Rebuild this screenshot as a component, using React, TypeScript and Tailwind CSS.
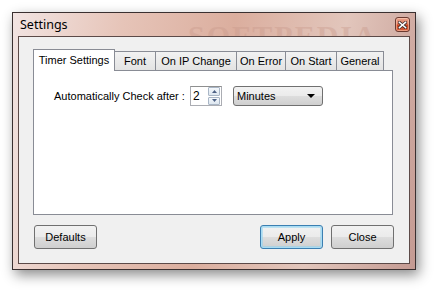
import React from 'react';

const tabs = [
  { label: 'Timer Settings', width: 'w-[82px]' },
  { label: 'Font', width: 'w-[42px]' },
  { label: 'On IP Change', width: 'w-[82px]' },
  { label: 'On Error', width: 'w-[50px]' },
  { label: 'On Start', width: 'w-[52px]' },
  { label: 'General', width: 'w-[48px]' },
];

const btn =
  'h-[24px] w-[63px] rounded-[3px] border text-[11px] text-black bg-[linear-gradient(#f2f2f2_0%,#ebebeb_48%,#dddddd_52%,#cfcfcf_100%)]';

const CloseButton = () => (
  <div className="flex h-[15px] w-[15px] items-center justify-center rounded-[3px] border border-[#6b3a30] bg-[linear-gradient(#eba58e_0%,#de7a5e_45%,#c9441f_55%,#d85e3c_100%)] shadow-[inset_0_0_0_1px_rgba(255,220,200,0.5)]">
    <svg width="9" height="8" viewBox="0 0 9 8">
      <path d="M1.5 1.5 L7.5 6.5 M7.5 1.5 L1.5 6.5" stroke="#3a2a2a" strokeWidth="3" strokeLinecap="square" />
      <path d="M1.5 1.5 L7.5 6.5 M7.5 1.5 L1.5 6.5" stroke="#ffffff" strokeWidth="1.6" strokeLinecap="square" />
    </svg>
  </div>
);

export default function App() {
  return (
    <div className="h-[291px] w-[436px] bg-white pl-[12px] pt-[12px] font-['Liberation_Sans',Arial,sans-serif]">
      <div className="relative flex h-[258px] w-[404px] flex-col overflow-hidden border border-[#3a3030] bg-[linear-gradient(100deg,#f2e4e2_0%,#e6c4b8_25%,#dbae9e_50%,#e2c6bc_75%,#c49a92_100%)] px-[5px] pb-[5px] shadow-[3px_5px_12px_rgba(0,0,0,0.45)]">
        {/* watermark in the glass */}
        <div className="pointer-events-none absolute left-[175px] top-[0px] text-[30px] font-bold tracking-[2px] text-[#c99a8c] opacity-40 font-['Liberation_Serif',serif]">
          SOFTPEDIA
        </div>

        {/* Title bar */}
        <div className="relative flex h-[23px] items-start justify-between">
          <span className="pl-[2px] pt-[5px] text-[12.5px] leading-[14px] text-black font-['Noto_Sans',sans-serif]">
            Settings
          </span>
          <div className="pt-[4px]">
            <CloseButton />
          </div>
        </div>

        {/* Client area */}
        <div className="relative flex flex-1 flex-col border border-[#5c4a48] bg-[#f0f0f0] pl-[14px] pr-[16px] pt-[12px]">
          {/* Tab header */}
          <div className="flex h-[21px] items-end">
            {tabs.map((t, i) =>
              i === 0 ? (
                <div
                  key={t.label}
                  className={`relative z-10 -mb-px flex h-[22px] items-center justify-center border border-b-0 border-[#898c95] bg-white text-[11px] text-black ${t.width}`}
                >
                  {t.label}
                </div>
              ) : (
                <div
                  key={t.label}
                  className={`-ml-px flex h-[19px] items-center justify-center border border-b-0 border-[#898c95] bg-[linear-gradient(#f2f2f2,#e3e3e3)] pt-[1px] text-[11px] text-black ${t.width}`}
                >
                  {t.label}
                </div>
              )
            )}
          </div>

          {/* Tab page */}
          <div className="relative h-[145px] w-[360px] border border-[#898c95] bg-white">
            <div className="flex items-center pl-[20px] pt-[15px]">
              <span className="w-[136px] text-[11px] text-black">Automatically Check after :</span>
              {/* numeric up/down */}
              <div className="flex h-[20px] w-[32px] items-center border border-[#abadb3] border-t-[#8e8f8f] bg-white">
                <span className="flex-1 pl-[2px] text-[12px] text-black">2</span>
                <div className="mr-px flex h-[18px] w-[12px] flex-col gap-px">
                  <div className="flex flex-1 items-center justify-center rounded-[1px] border border-[#a9b6c6] bg-[linear-gradient(#f4f8fc,#dde6ef)]">
                    <svg width="5" height="3" viewBox="0 0 5 3"><path d="M0 3 L2.5 0 L5 3 Z" fill="#4d6185" /></svg>
                  </div>
                  <div className="flex flex-1 items-center justify-center rounded-[1px] border border-[#a9b6c6] bg-[linear-gradient(#f4f8fc,#dde6ef)]">
                    <svg width="5" height="3" viewBox="0 0 5 3"><path d="M0 0 L2.5 3 L5 0 Z" fill="#4d6185" /></svg>
                  </div>
                </div>
              </div>
              {/* combobox */}
              <div className="ml-[11px] flex h-[20px] w-[90px] items-center justify-between rounded-[3px] border border-[#707070] bg-[linear-gradient(#f2f2f2_0%,#ebebeb_48%,#dddddd_52%,#cfcfcf_100%)] pl-[3px] pr-[7px]">
                <span className="text-[11px] text-black">Minutes</span>
                <svg width="8" height="4" viewBox="0 0 8 4"><path d="M0 0 L8 0 L4 4 Z" fill="#000" /></svg>
              </div>
            </div>
          </div>

          {/* Buttons */}
          <div className="mt-[10px] flex w-[361px] items-center">
            <button className={`${btn} ml-px border-[#707070]`}>Defaults</button>
            <div className="flex-1" />
            <button className={`${btn} border-[#3c7fb1] shadow-[inset_0_0_0_1px_#a8dcf4,inset_0_0_0_2px_rgba(140,210,240,0.5)]`}>
              Apply
            </button>
            <button className={`${btn} ml-[8px] border-[#707070]`}>Close</button>
          </div>
        </div>
      </div>
    </div>
  );
}
